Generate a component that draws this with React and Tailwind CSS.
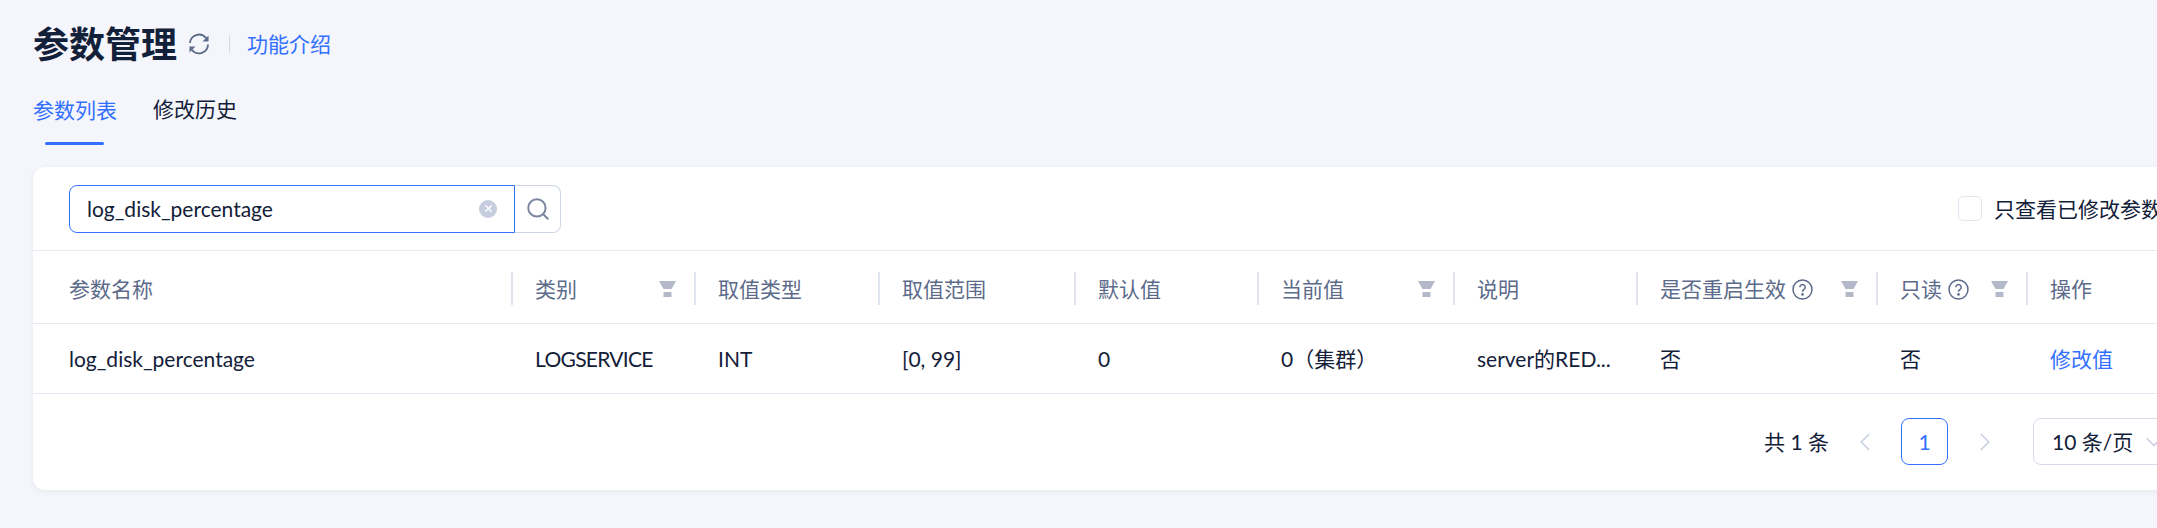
import { ChevronDown, ChevronLeft, ChevronRight, Search, X } from "lucide-react";

const FONT = { fontFamily: '"Lato", "Noto Sans CJK SC", sans-serif' };

const columns = [
  { title: "参数名称", width: "w-[478px]", pad: "pl-9", value: "log_disk_percentage" },
  { title: "类别", width: "w-[183px]", filter: true, value: <span className="tracking-[-0.7px]">LOGSERVICE</span> },
  { title: "取值类型", width: "w-[184px]", value: "INT" },
  { title: "取值范围", width: "w-[196px]", value: "[0, 99]" },
  { title: "默认值", width: "w-[183px]", value: "0" },
  { title: "当前值", width: "w-[196px]", filter: true, value: "0（集群）" },
  { title: "说明", width: "w-[183px]", value: "server的RED..." },
  { title: "是否重启生效", width: "w-[240px]", filter: true, help: true, value: "否" },
  { title: "只读", width: "w-[150px]", filter: true, help: true, value: "否" },
  { title: "操作", width: "w-[200px]", link: true, value: "修改值" },
];

function SyncIcon() {
  return (
    <svg width="24" height="24" viewBox="0 0 24 24" fill="none" stroke="#5c6b8a" strokeWidth="1.8">
      <path d="M3 11a9 9 0 0 1 16-5l1.5 2" />
      <path d="M21 12.5a9 9 0 0 1-16 5.5l-1.5-2" />
      <path d="M21.5 3.5V9.5H15.5" fill="#5c6b8a" stroke="none" />
      <path d="M2.5 20.5V14.5H8.5" fill="#5c6b8a" stroke="none" />
    </svg>
  );
}

function FilterIcon() {
  return (
    <svg width="17" height="16" viewBox="0 0 17 16" fill="#b3b9c8">
      <path d="M0 0H17L12.5 8H4.5Z" />
      <rect x="4.5" y="11" width="8" height="5" />
    </svg>
  );
}

function HelpIcon() {
  return (
    <svg width="21" height="21" viewBox="0 0 21 21" fill="none" stroke="#5c6b8a" strokeWidth="1.5">
      <circle cx="10.5" cy="10.5" r="9.5" />
      <path d="M7.8 8.2a2.7 2.7 0 1 1 4.2 2.3c-1 .6-1.5 1-1.5 2.2" />
      <circle cx="10.5" cy="15.4" r="0.6" fill="#5c6b8a" />
    </svg>
  );
}

export default function App() {
  return (
    <div className="h-[528px] w-[2157px] overflow-hidden bg-[#f4f6fb] text-[21px] text-[#132039]" style={FONT}>
      {/* ===== HEADER ===== */}
      <div className="box-content flex h-[46px] items-center pl-[33px] pt-[21px]">
        <h1 className="text-[36px] leading-[46px] font-bold">参数管理</h1>
        <span className="ml-[10px]"><SyncIcon /></span>
        <span className="ml-[18px] mr-[17px] h-[18px] w-px bg-[#d5dbe8]" />
        <a className="text-[#3370ff]">功能介绍</a>
      </div>

      {/* ===== TABS ===== */}
      <div className="mt-[27px] flex h-[50px] gap-[36px] pl-[33px]">
        <div className="relative text-[#3370ff]">
          <span className="leading-[30px]">参数列表</span>
          <span className="absolute bottom-[-1px] left-[12px] h-[3px] w-[59px] rounded-full bg-[#3370ff]" />
        </div>
        <div className="leading-[30px]">修改历史</div>
      </div>

      {/* ===== CARD ===== */}
      <div className="ml-[33px] mt-[23px] h-[323px] w-[2300px] rounded-[12px] bg-white shadow-[0_2px_6px_rgba(19,32,57,0.06)]">
        <div className="flex h-[84px] items-center justify-between border-b border-[#e6e9f3] pl-9 pr-[171px]">
          <div className="flex">
            <div className="flex h-[48px] w-[446px] items-center justify-between rounded-l-[8px] border border-[#3370ff] pl-[17px] pr-[17px]">
              <span>log_disk_percentage</span>
              <span className="flex h-[18px] w-[18px] items-center justify-center rounded-full bg-[#c5cddf]">
                <X size={11} color="#fff" strokeWidth={3} />
              </span>
            </div>
            <div className="flex h-[48px] w-[46px] items-center justify-center rounded-r-[8px] border border-l-0 border-[#cdd5e4]">
              <Search size={26} color="#7a869e" strokeWidth={1.8} />
            </div>
          </div>
          <div className="flex items-center gap-[12px]">
            <span className="h-[25px] w-[24px] rounded-[5px] border border-[#e0e5ef]" />
            <span>只查看已修改参数</span>
          </div>
        </div>

        <div className="flex h-[73px] border-b border-[#e6e9f3] text-[#5c6b8a]">
          {columns.map((col, i) => (
            <div key={col.title} className={`${col.width} ${col.pad || "pl-[24px]"} relative flex shrink-0 items-center pr-[18px] pt-[4px]`}>
              {i > 0 && <span className="absolute left-0 top-[21px] h-[33px] w-[1.5px] bg-[#e0e5f0]" />}
              <span>{col.title}</span>
              {col.help && <span className="ml-[6px] mt-[1px]"><HelpIcon /></span>}
              {col.filter && <span className="ml-auto"><FilterIcon /></span>}
            </div>
          ))}
        </div>

        <div className="flex h-[70px] border-b border-[#e6e9f3]">
          {columns.map((col) => (
            <div
              key={col.title}
              className={`${col.width} ${col.pad || "pl-[24px]"} flex shrink-0 items-center ${col.link ? "text-[#3370ff]" : ""}`}
            >
              {col.value}
            </div>
          ))}
        </div>

        {/* ===== PAGINATION ===== */}
        <div className="flex pl-[1731px] pt-[24px]">
          <span className="flex h-[47px] w-[66px] items-center whitespace-nowrap">共 1 条</span>
          <span className="ml-[24px] flex h-[47px] w-[22px] items-center justify-center">
            <ChevronLeft size={30} color="#c9d0df" strokeWidth={1.4} className="shrink-0" />
          </span>
          <span className="ml-[25px] flex h-[47px] w-[47px] items-center justify-center rounded-[8px] border border-[#3370ff] text-[#3370ff]">1</span>
          <span className="ml-[26px] flex h-[47px] w-[22px] items-center justify-center">
            <ChevronRight size={30} color="#c9d0df" strokeWidth={1.4} className="shrink-0" />
          </span>
          <span className="ml-[37px] flex h-[47px] w-[160px] items-center gap-[7px] rounded-[8px] border border-[#d5dbe8] pl-[18px]">
            10 条/页
            <ChevronDown size={28} color="#c9d0df" strokeWidth={1.4} />
          </span>
        </div>
      </div>
    </div>
  );
}
